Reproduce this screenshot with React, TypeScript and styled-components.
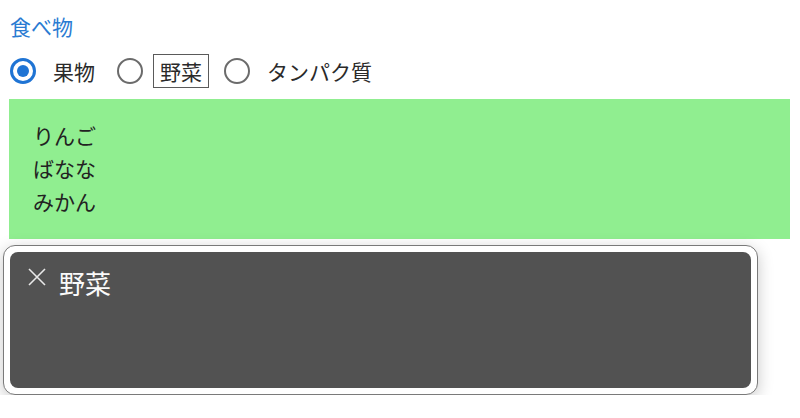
import React, { useState } from "react";
import styled, { createGlobalStyle } from "styled-components";

const Global = createGlobalStyle`
  html, body { margin: 0; padding: 0; background: #fff; }
  body { font-family: "Noto Sans CJK JP", "Noto Sans", sans-serif; }
`;

const Page = styled.div`
  padding: 11px 10px 0 9px;
  display: flex;
  flex-direction: column;
`;

const Title = styled.div`
  color: #2a7bd2;
  font-size: 21px;
  line-height: 30px;
  padding-left: 1px;
`;

const RadioRow = styled.div`
  display: flex;
  align-items: center;
  height: 40px;
  margin-top: 10px;
  padding-left: 1px;
`;

const Option = styled.label`
  display: flex;
  align-items: center;
  gap: 10px;
  margin-right: 15px;
  cursor: pointer;
`;

const Circle = styled.span<{ $checked: boolean }>`
  box-sizing: border-box;
  width: 26px;
  height: 26px;
  border-radius: 50%;
  border: ${(p) => (p.$checked ? "3px solid #1f74d4" : "2.5px solid #6b6b6b")};
  display: flex;
  align-items: center;
  justify-content: center;
  &::after {
    content: "";
    display: ${(p) => (p.$checked ? "block" : "none")};
    width: 12px;
    height: 12px;
    border-radius: 50%;
    background: #1f74d4;
  }
`;

const LabelText = styled.span<{ $focused: boolean }>`
  font-size: 21px;
  line-height: 26px;
  color: #2a2a2a;
  padding: 3px 6px;
  border: 1px solid ${(p) => (p.$focused ? "#5a5a5a" : "transparent")};
`;

const Panel = styled.div`
  margin-top: 8px;
  background: #90ee90;
  padding: 20px 24px 21px;
  display: flex;
  flex-direction: column;
`;

const Item = styled.div`
  font-size: 21px;
  line-height: 33px;
  color: #222;
`;

const Toast = styled.div`
  margin: 6px 32px 0 -6px;
  border: 1px solid #7a7a7a;
  border-radius: 12px;
  background: #fff;
  padding: 6px;
  box-shadow: 0 4px 16px rgba(0, 0, 0, 0.22);
`;

const ToastBody = styled.div`
  background: #525252;
  border-radius: 8px;
  height: 136px;
  box-sizing: border-box;
  padding: 14px 18px;
  display: flex;
  align-items: flex-start;
  gap: 13px;
`;

const CloseIcon = styled.svg`
  margin-top: 2px;
  flex: none;
`;

const ToastText = styled.div`
  color: #fafafa;
  font-size: 26px;
  line-height: 34px;
`;

const options = ["果物", "野菜", "タンパク質"];

export default function App() {
  const [selected, setSelected] = useState(0);
  const focused = 1;
  return (
    <>
      <Global />
      <Page>
        <Title>食べ物</Title>
        <RadioRow>
          {options.map((o, i) => (
            <Option key={o} onClick={() => setSelected(i)}>
              <Circle $checked={selected === i} />
              <LabelText $focused={focused === i}>{o}</LabelText>
            </Option>
          ))}
        </RadioRow>
        <Panel>
          <Item>りんご</Item>
          <Item>ばなな</Item>
          <Item>みかん</Item>
        </Panel>
        <Toast>
          <ToastBody>
            <CloseIcon width="18" height="18" viewBox="0 0 18 18">
              <path d="M1 1 L17 17 M17 1 L1 17" stroke="#e8e8e8" strokeWidth="1.6" fill="none" />
            </CloseIcon>
            <ToastText>野菜</ToastText>
          </ToastBody>
        </Toast>
      </Page>
    </>
  );
}
